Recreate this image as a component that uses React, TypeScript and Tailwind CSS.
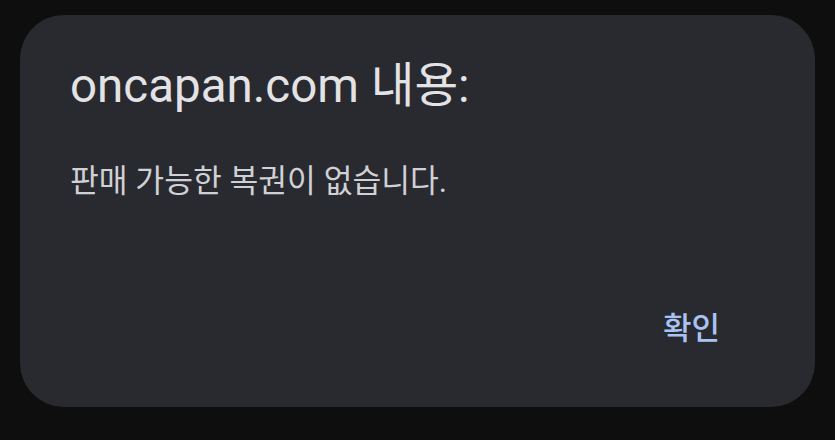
import React from "react";

export default function App() {
  return (
    <div className="w-[835px] h-[440px] bg-[#0e0e0e] pt-[15px] pl-[20px]">
      <div
        className="w-[795px] h-[392px] rounded-[44px] bg-[#292a2f] flex flex-col pl-[50px] pr-[95px]"
        style={{ fontFamily: "Roboto, 'Noto Sans CJK KR', sans-serif" }}
      >
        <div className="mt-[48px] text-[47.5px] leading-[47px] text-[#e3e3e6] tracking-[0px] whitespace-nowrap">
          oncapan.com 내용:
        </div>
        <div className="mt-[52px] text-[31.3px] leading-[40px] text-[#d0d1d6] whitespace-nowrap">
          판매 가능한 복권이 없습니다.
        </div>
        <div className="mt-auto mb-[58px] flex justify-end">
          <span className="text-[31px] leading-[40px] font-medium text-[#a9c3f5]">확인</span>
        </div>
      </div>
    </div>
  );
}
